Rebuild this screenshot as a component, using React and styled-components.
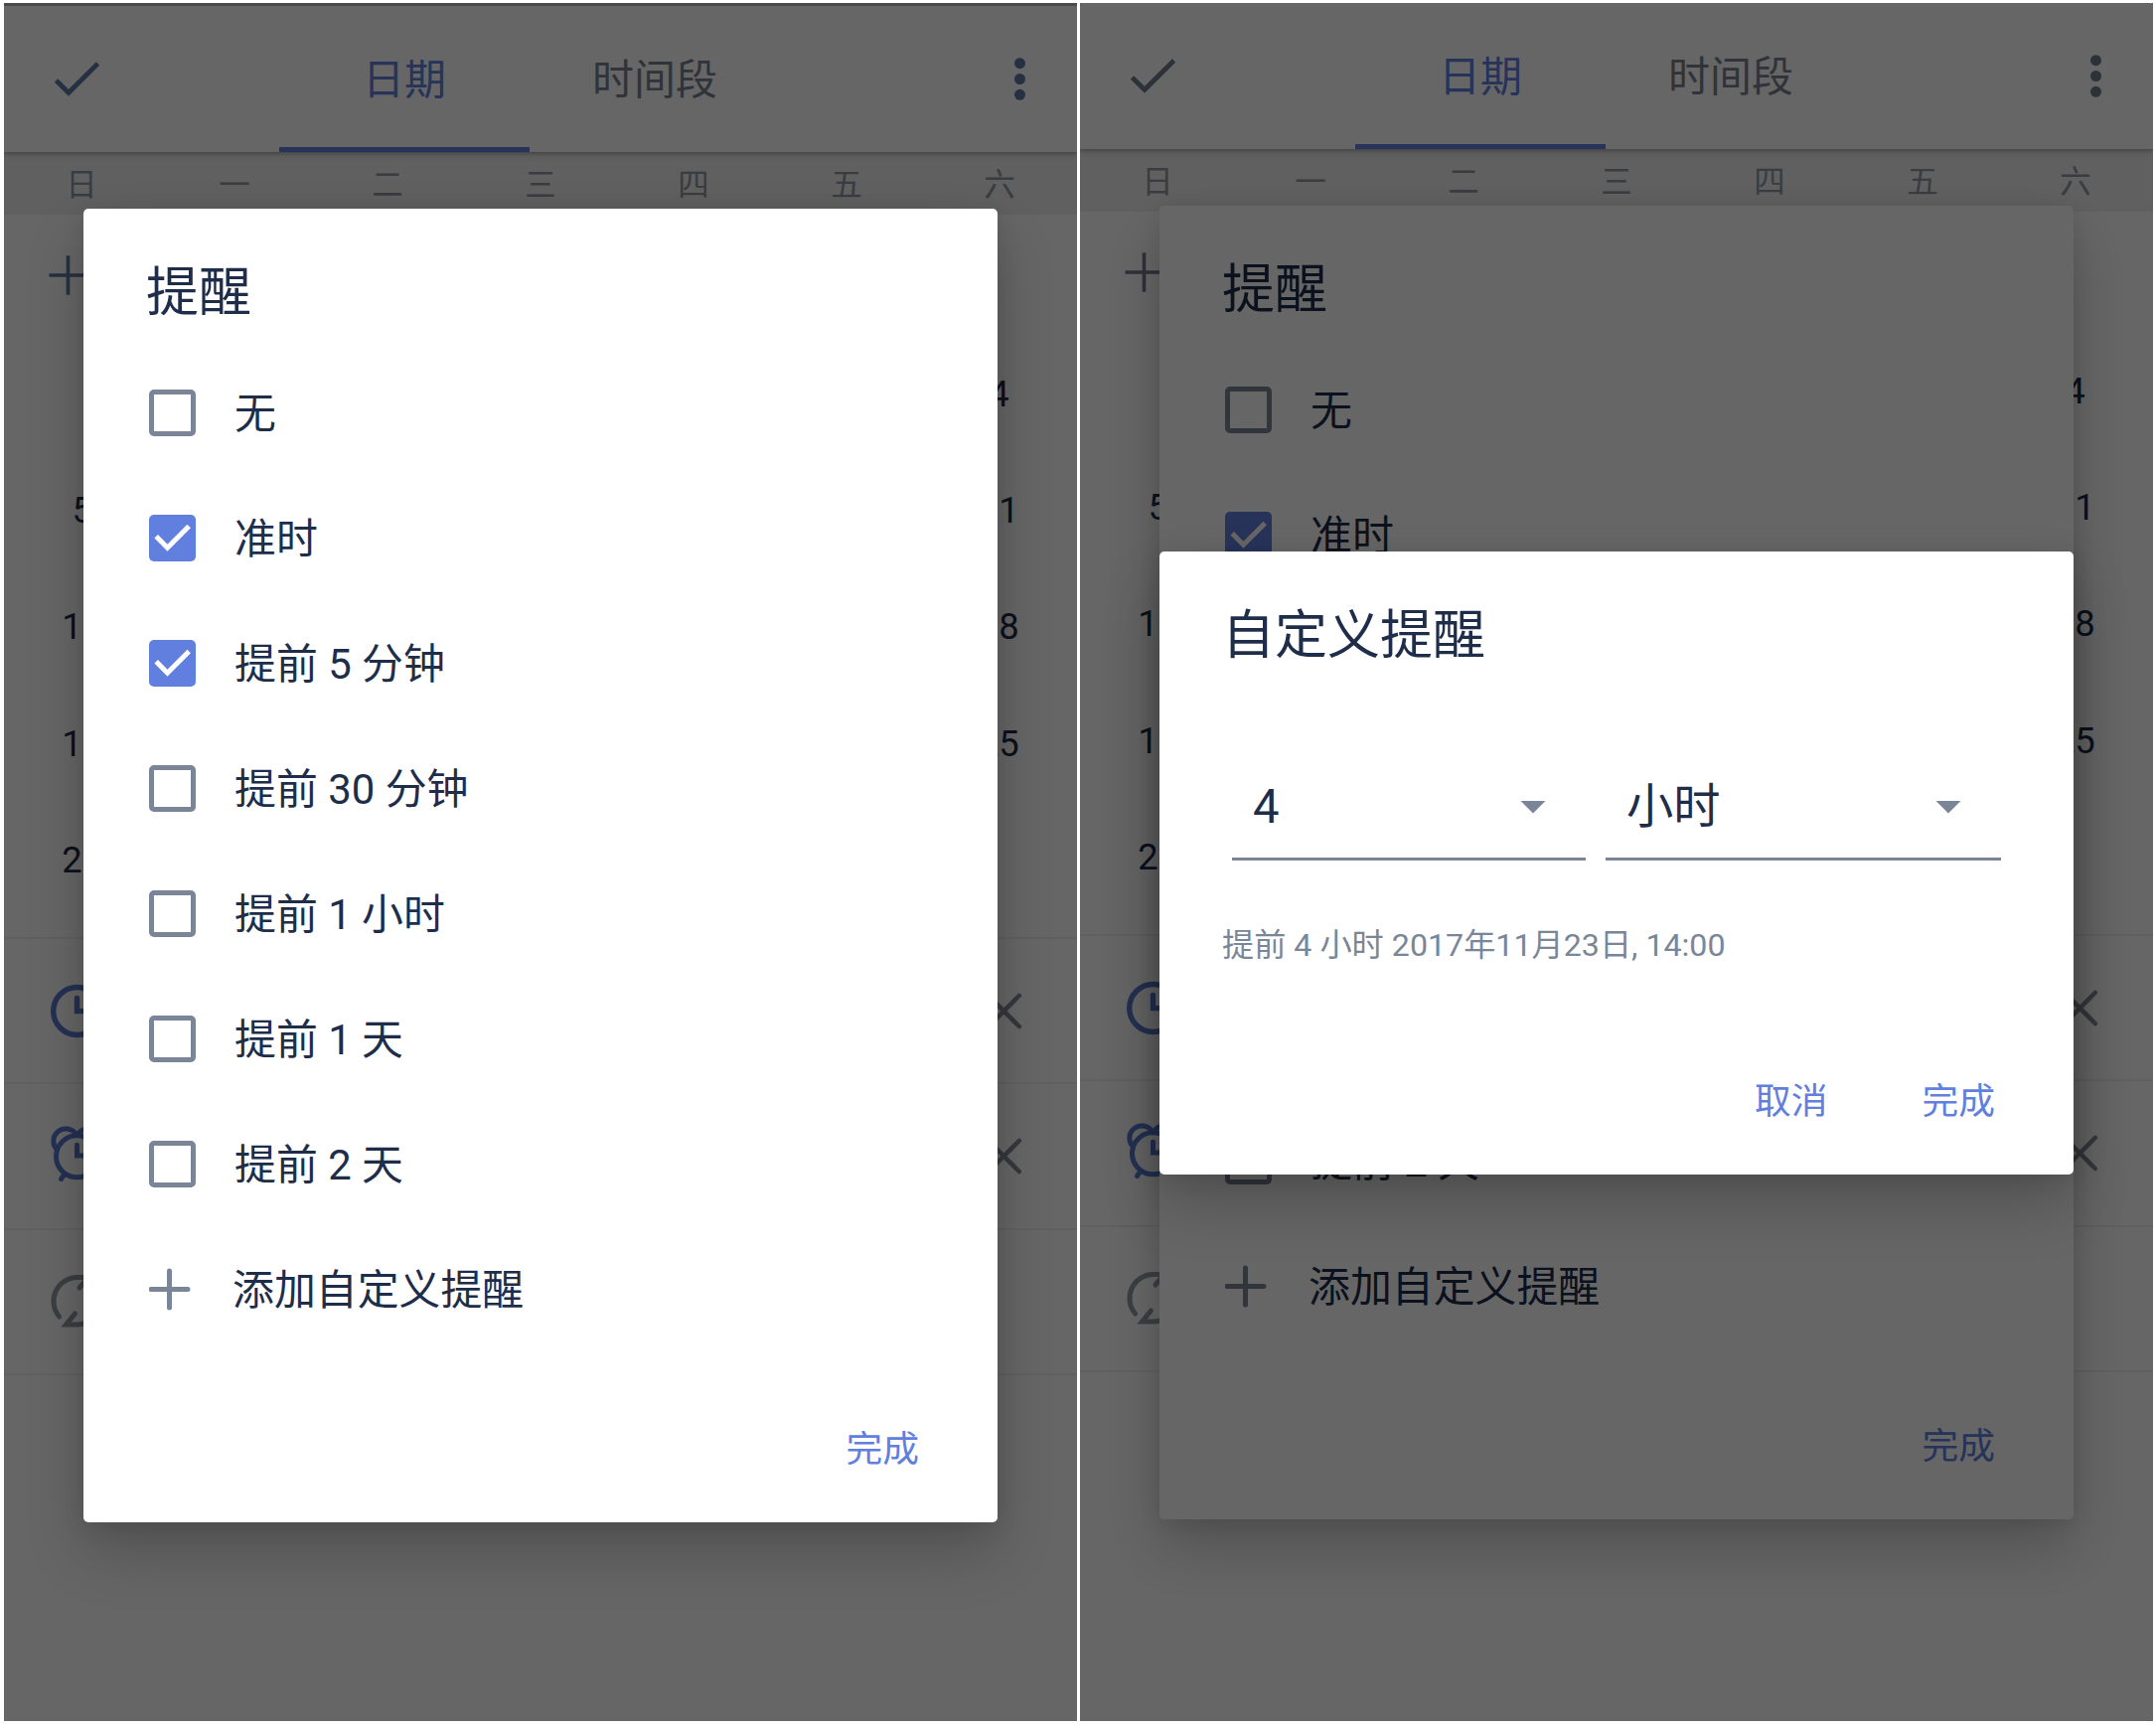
import React from "react";
import styled, { createGlobalStyle } from "styled-components";

const color = {
  ink: "#1e2e4a",
  muted: "#7a8697",
  accent: "#617fde",
  rule: "#f0f0f0",
};

const GlobalStyle = createGlobalStyle`
  *, *::before, *::after { box-sizing: border-box; }
  body {
    margin: 0;
    background: #fff;
    color: ${color.ink};
    font-family: Roboto, "Noto Sans CJK SC", sans-serif;
  }
`;

const Board = styled.main`
  display: flex;
  gap: 3px;
  width: 2170px;
  height: 1740px;
  padding: 3px 3px 8px 4px;
  overflow: hidden;
`;

const Phone = styled.section`
  position: relative;
  width: 1080px;
  height: 1729px;
  background: #fff;
  overflow: hidden;
`;

/* ---------- schedule page ---------- */

const Page = styled.div`
  isolation: isolate;
  display: flex;
  flex-direction: column;
  border-top: ${(p) => (p.$edge ? "3px solid #bdbdbd" : "0")};
`;

const AppBar = styled.header`
  position: relative;
  z-index: 1;
  display: grid;
  grid-template-columns: 277px 252px 252px 1fr;
  height: 147px;
  background: #fff;
  box-shadow: 0 2px 3px rgba(0, 0, 0, 0.2), 0 3px 8px rgba(0, 0, 0, 0.12);
`;

const BarAction = styled.div`
  display: flex;
  align-items: center;
  justify-content: ${(p) => (p.$end ? "flex-end" : "flex-start")};
  padding: ${(p) => (p.$end ? "0 26px 0 0" : "0 0 0 42px")};
  color: ${(p) => p.$tone};
`;

const Tab = styled.div`
  display: flex;
  align-items: center;
  justify-content: center;
  padding-top: ${(p) => (p.$active ? "8px" : "3px")};
  border-bottom: ${(p) => (p.$active ? `5px solid ${color.accent}` : "0")};
  color: ${(p) => (p.$active ? color.accent : "#78818f")};
  font-size: 42px;
  line-height: 60px;
`;

const Weekdays = styled.div`
  display: grid;
  grid-template-columns: repeat(7, 1fr);
  align-items: center;
  height: 63px;
  padding: 5px 1px 0;
  background: #f0f0f0;
  color: #8f97a1;
  font-size: 31.5px;
  line-height: 42px;
  text-align: center;
`;

const AddRow = styled.div`
  display: flex;
  align-items: center;
  height: 122.5px;
  padding-left: 43px;
  color: ${(p) => p.$tone};
`;

const Week = styled.div`
  display: flex;
  align-items: center;
  justify-content: space-between;
  height: 117.2px;
  padding: 0 1.5px;
`;

const Day = styled.span`
  width: 154.3px;
  font-size: 36.4px;
  line-height: 44px;
  text-align: center;
`;

const Settings = styled.div`
  display: flex;
  flex-direction: column;
  margin-top: 18.5px;
  border-bottom: 2px solid ${color.rule};
`;

const Setting = styled.div`
  display: flex;
  align-items: center;
  justify-content: space-between;
  height: 146.3px;
  padding: 0 42px;
  border-top: 2px solid ${color.rule};
  color: ${(p) => (p.$active ? "#5a7bd0" : "#959ca6")};
`;

const Clear = styled.span`
  display: flex;
  color: #858d99;
`;

/* ---------- dialogs ---------- */

const Layer = styled.div`
  position: absolute;
  inset: 0;
  display: flex;
  align-items: flex-start;
  justify-content: center;
  padding-top: ${(p) => p.$top}px;
  background: ${(p) => (p.$dim ? "rgba(0, 0, 0, 0.6)" : "transparent")};
`;

const Dialog = styled.div`
  display: flex;
  flex-direction: column;
  width: 920px;
  height: ${(p) => p.$height}px;
  border-radius: 5px;
  background: #fff;
  box-shadow: 0 30px 60px rgba(0, 0, 0, 0.2), 0 4px 22px rgba(0, 0, 0, 0.1);
`;

const Title = styled.h2`
  margin: 0;
  height: 142px;
  padding: 55px 63px 0;
  font-size: 53px;
  font-weight: 400;
  line-height: 60px;
`;

const Option = styled.div`
  display: flex;
  align-items: center;
  gap: ${(p) => p.$gap ?? 39}px;
  height: 126px;
  padding-left: 66px;
  font-size: 41.9px;
  line-height: 60px;
`;

const OptionText = styled.span`
  padding-top: 3px;
  white-space: pre;
`;

const Box = styled.span`
  display: flex;
  width: 47px;
  height: 47px;
  border: ${(p) => (p.$checked ? "0" : `5px solid ${color.muted}`)};
  border-radius: 5px;
  background: ${(p) => (p.$checked ? color.accent : "transparent")};
`;

const PlusMark = styled.svg`
  display: block;
  width: 47px;
  height: 47px;
  color: ${color.muted};
`;

const Actions = styled.div`
  display: flex;
  justify-content: flex-end;
  gap: 95px;
  margin-top: auto;
  padding: 0 79px 47px 0;
`;

const Action = styled.button`
  padding: 0;
  border: 0;
  background: none;
  color: ${color.accent};
  font: inherit;
  font-size: 36.75px;
  line-height: 52px;
`;

const Fields = styled.div`
  display: flex;
  gap: 20px;
  padding: 56px 73px 0;
`;

const Select = styled.div`
  display: flex;
  align-items: center;
  justify-content: space-between;
  width: ${(p) => p.$width}px;
  height: 113px;
  padding: 8px 40px 0 ${(p) => p.$inset}px;
  border-bottom: 3px solid ${color.muted};
  font-size: 47.25px;
  line-height: 64px;
`;

const Caret = styled.span`
  width: 26px;
  height: 13px;
  background: ${color.muted};
  clip-path: polygon(0 0, 100% 0, 50% 100%);
`;

const Summary = styled.p`
  margin: 61px 0 0;
  padding-left: 63px;
  color: ${color.muted};
  font-size: 32.2px;
  line-height: 48px;
  white-space: pre;
`;

/* ---------- icons ---------- */

const Icon = ({ children, width = 5 }) => (
  <svg
    width="63"
    height="63"
    viewBox="0 0 63 63"
    fill="none"
    stroke="currentColor"
    strokeWidth={width}
    strokeLinecap="round"
  >
    {children}
  </svg>
);

const CheckIcon = () => (
  <Icon width={4.8}>
    <path d="M10.5 33 23 45.3 52.5 16" strokeLinecap="butt" />
  </Icon>
);

const MoreIcon = () => (
  <svg width="63" height="63" viewBox="0 0 63 63" fill="currentColor">
    <circle cx="31.5" cy="15.7" r="5.5" />
    <circle cx="31.5" cy="31.5" r="5.5" />
    <circle cx="31.5" cy="47.3" r="5.5" />
  </svg>
);

const ThinPlusIcon = () => (
  <svg width="44" height="44" viewBox="0 0 44 44" fill="none" stroke="currentColor" strokeWidth="3.6">
    <path d="M21.5 2.3v39.4M2.5 22H41" />
  </svg>
);

const ClockIcon = () => (
  <Icon width={5.4}>
    <circle cx="31.7" cy="31.5" r="24" />
    <path d="M31.5 18.4v13.2H44" />
  </Icon>
);

const AlarmIcon = () => (
  <Icon>
    <circle cx="31.5" cy="31.8" r="21" />
    <path d="M11.5 25A12.3 12.3 0 1 1 30.3 9.3M32.7 9.3A12.3 12.3 0 1 1 51.5 25" />
    <path d="M19 49.5 15.5 54.5M44 49.5l3.5 5M31.5 20.3V31H42" />
  </Icon>
);

const RepeatIcon = () => (
  <Icon>
    <path d="M13.6 47A24 24 0 0 1 31.7 7.5H43L34 18" />
    <path d="M49.8 16A24 24 0 0 1 31.7 55H20.5L29.5 44" />
  </Icon>
);

const CloseIcon = () => (
  <Icon width={4.6}>
    <path d="m16 16 30.8 31M46.8 16 16 47" />
  </Icon>
);

const Checkbox = ({ checked }) => (
  <Box $checked={checked}>
    {checked && (
      <svg width="47" height="47" viewBox="0 0 47 47" fill="none" stroke="#fff" strokeWidth="5">
        <path d="M7.2 21.8 18.5 33.2 40.2 11.5" />
      </svg>
    )}
  </Box>
);

/* ---------- content ---------- */

const weekdays = ["日", "一", "二", "三", "四", "五", "六"];
const weeks = [["", 4], [5, 11], [12, 18], [19, 25], [26, ""]];

const reminders = [
  { label: "无" },
  { label: "准时", checked: true },
  { label: "提前 5 分钟", checked: true },
  { label: "提前 30 分钟" },
  { label: "提前 1 小时" },
  { label: "提前 1 天" },
  { label: "提前 2 天" },
];

const SchedulePage = ({ edge, tone }) => (
  <Page $edge={edge}>
    <AppBar>
      <BarAction $tone={tone}>
        <CheckIcon />
      </BarAction>
      <Tab $active>日期</Tab>
      <Tab>时间段</Tab>
      <BarAction $end $tone={tone}>
        <MoreIcon />
      </BarAction>
    </AppBar>
    <Weekdays>
      {weekdays.map((d) => (
        <span key={d}>{d}</span>
      ))}
    </Weekdays>
    <AddRow $tone={tone}>
      <ThinPlusIcon />
    </AddRow>
    {weeks.map(([first, last]) => (
      <Week key={`${first}-${last}`}>
        <Day>{first}</Day>
        <Day>{last}</Day>
      </Week>
    ))}
    <Settings>
      <Setting $active>
        <ClockIcon />
        <Clear>
          <CloseIcon />
        </Clear>
      </Setting>
      <Setting $active>
        <AlarmIcon />
        <Clear>
          <CloseIcon />
        </Clear>
      </Setting>
      <Setting>
        <RepeatIcon />
      </Setting>
    </Settings>
  </Page>
);

const ReminderDialog = () => (
  <Dialog $height={1322}>
    <Title>提醒</Title>
    {reminders.map((r) => (
      <Option key={r.label}>
        <Checkbox checked={r.checked} />
        <OptionText>{r.label}</OptionText>
      </Option>
    ))}
    <Option $gap={37}>
      <PlusMark viewBox="0 0 47 47" fill="none" stroke="currentColor" strokeWidth="5" strokeLinecap="round">
        <path d="M20.5 5v37M2 23.5h37" />
      </PlusMark>
      <OptionText>添加自定义提醒</OptionText>
    </Option>
    <Actions>
      <Action>完成</Action>
    </Actions>
  </Dialog>
);

const CustomReminderDialog = () => (
  <Dialog $height={627}>
    <Title>自定义提醒</Title>
    <Fields>
      <Select $width={356} $inset={21}>
        <span>4</span>
        <Caret />
      </Select>
      <Select $width={398} $inset={21}>
        <span>小时</span>
        <Caret />
      </Select>
    </Fields>
    <Summary>提前 4 小时 2017年11月23日, 14:00</Summary>
    <Actions>
      <Action>取消</Action>
      <Action>完成</Action>
    </Actions>
  </Dialog>
);

export default function App() {
  return (
    <>
      <GlobalStyle />
      <Board>
        <Phone>
          <SchedulePage edge tone="#5d7ba6" />
          <Layer $dim $top={207}>
            <ReminderDialog />
          </Layer>
        </Phone>
        <Phone>
          <SchedulePage tone="#727a8d" />
          <Layer $top={204}>
            <ReminderDialog />
          </Layer>
          <Layer $dim $top={552}>
            <CustomReminderDialog />
          </Layer>
        </Phone>
      </Board>
    </>
  );
}
